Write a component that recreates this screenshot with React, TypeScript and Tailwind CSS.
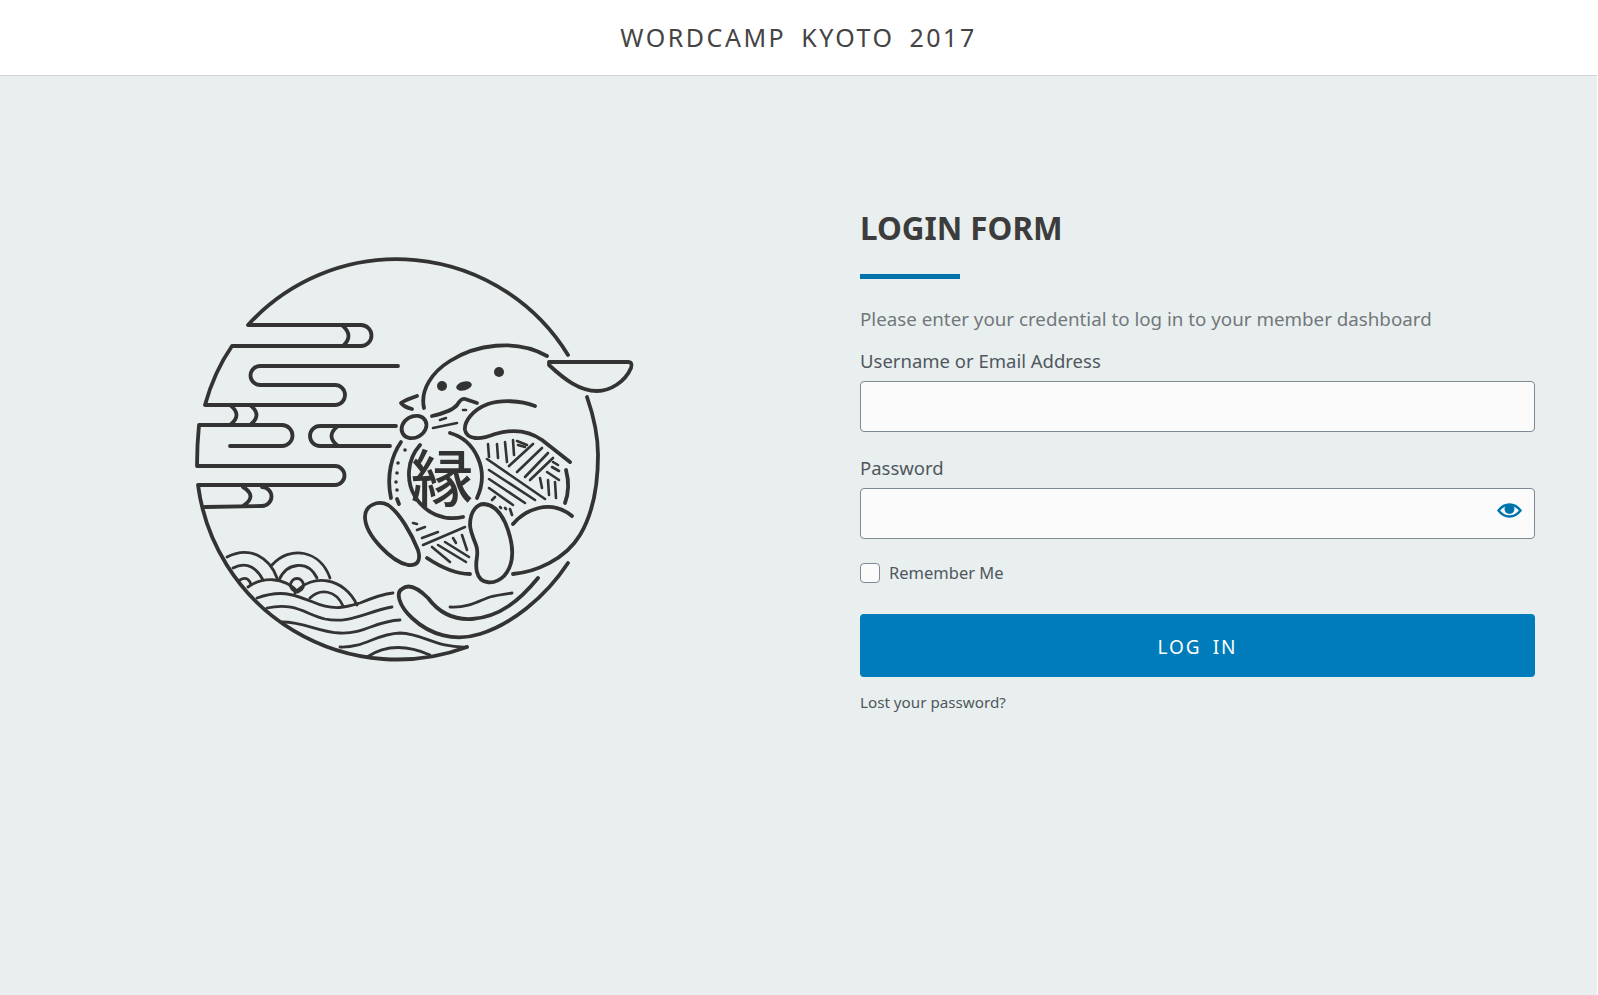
const FONT = "font-['Noto_Sans',sans-serif]";

// fine stripes on the ball of yarn, [x1, y1, x2, y2]
const stripes: number[][] = [
  [488, 444, 489, 457], [497, 444, 498, 458], [505, 442, 507, 462], [513, 440, 514, 455],
  [518, 445, 525, 447], [517, 441, 527, 445],
  [509, 466, 533, 444], [517, 472, 542, 448], [525, 477, 548, 453], [530, 480, 553, 458],
  [553, 462, 558, 465], [547, 472, 559, 480], [552, 467, 559, 471],
  [540, 478, 542, 488], [548, 480, 549, 495], [555, 482, 556, 498],
  [487, 459, 545, 499], [489, 470, 535, 500], [489, 479, 525, 503], [489, 488, 513, 505],
  [492, 500, 495, 497], [500, 507, 501, 508], [505, 508, 506, 509], [510, 509, 512, 515],
  [413, 523, 417, 524], [417, 530, 425, 527], [422, 538, 438, 532], [423, 545, 465, 527],
  [432, 547, 450, 562], [438, 545, 466, 562], [445, 542, 469, 557], [453, 538, 456, 543],
  [462, 535, 467, 550],
];

const dots: number[][] = [
  [405, 450], [398, 463], [397, 473], [396, 482], [397, 490],
];

function Logo() {
  return (
    <svg viewBox="190 250 450 420" width="450" height="420" fill="none" stroke="#333333" strokeWidth="3.8" strokeLinecap="round" strokeLinejoin="round">
      {/* rim and clouds */}
      <path d="M568 355 A201 201 0 0 0 248 325 L361 325 A10.5 10.5 0 0 1 361 346 L232 346 Q214 372 205 405 L335 405 A10 10 0 0 0 335 385 L260 385 A9.5 9.5 0 0 1 260 366 L398 366" />
      <path d="M343 326 Q354 336 343 346 M230 405 Q243 415 230 425 M250 405 Q263 415 250 425" />
      <path d="M396 426 L320 426 A10 10 0 0 0 320 446 L390 446 M338 426 Q325 436 338 446" />
      <path d="M230 446 L282 446 A10.5 10.5 0 0 0 282 425 L199 425 Q197 445 197 466 L335 466 A9.5 9.5 0 0 1 335 485 L198 485 A201 201 0 0 0 467 647" />
      <path d="M205 507 L262 506 A9.5 9.5 0 0 0 262 487 M243 506 Q258 496 243 487" />
      {/* waves */}
      <g strokeWidth="2.8">
        <path d="M227 557 C250 545 270 558 277 578 M233 568 C248 560 258 570 263 580 M240 580 C246 576 250 580 251 585" />
        <path d="M272 565 C290 545 320 550 330 578 M279 580 C287 562 308 560 317 578" />
        <circle cx="297" cy="585" r="6.5" />
        <path d="M248 587 C262 577 283 576 298 592 M295 593 C312 572 345 578 357 605 M310 598 C320 588 336 590 343 606" />
        <path d="M257 598 C285 588 298 597 313 602 C335 612 350 606 360 603 C372 598 382 594 393 593" />
        <path d="M267 608 C295 602 305 614 325 619 C350 624 365 612 392 607" />
        <path d="M282 622 C305 622 318 632 340 633 C365 634 375 621 400 620" />
        <path d="M340 647 C365 648 375 634 400 633 C425 634 435 648 467 647 M367 657 C385 645 405 644 430 655" />
      </g>
      {/* seal */}
      <path d="M424 408 C420 390 432 372 450 361 C475 345 515 338 547 356" />
      <path d="M549 362 L628 362 Q633 362 631 368 C625 382 610 391 597 391 C580 391 565 380 549 365 Z" />
      <path d="M587 397 C595 420 598 440 598 455 C598 490 592 515 580 535 C565 560 535 572 513 574" />
      <path d="M568 563 C545 598 510 625 480 634 C455 642 430 635 412 618 C398 605 396 592 402 589 C410 582 420 590 428 598 C440 614 455 620 472 619 C500 617 520 600 538 578" />
      <path d="M450 607 C470 608 480 600 490 597 C497 595 505 594 512 593" strokeWidth="2.8" />
      <circle cx="499" cy="372" r="5" fill="#333333" stroke="none" />
      <circle cx="442" cy="386" r="5" fill="#333333" stroke="none" />
      <ellipse cx="464" cy="386" rx="8" ry="4.5" transform="rotate(-15 464 386)" fill="#333333" stroke="none" />
      <path d="M432 416 C445 413 453 410 457 405 C460 400 462 398 465 399 L477 403" />
      <path d="M433 428 L457 423 M440 420 L446 418 M463 410 L466 410" strokeWidth="2.6" />
      <path d="M535 406 C520 400 500 400 488 404 C472 410 464 422 465 430 C467 440 480 440 495 434 C512 429 528 430 542 440 L570 462" />
      <ellipse cx="414" cy="427" rx="13" ry="10.5" transform="rotate(-30 414 427)" />
      <path d="M417 396 Q405 400 401 403 Q404 407 412 409" />
      <path d="M365 517 C365 505 378 500 388 505 C400 513 412 535 418 550 C421 560 418 566 408 565 C392 562 365 535 365 517 Z" />
      <path d="M470 525 C470 510 478 504 484 504 C495 505 503 515 508 530 C514 548 514 565 504 576 C495 585 480 585 477 572 C474 560 480 555 476 545 C472 535 470 530 470 525 Z" />
      <path d="M513 524 C525 510 550 498 572 516" />
      {/* ball of yarn */}
      <path d="M401 442 C392 455 386 475 391 498" />
      <path d="M420 445 A44 44 0 0 0 463 517 M450 433 C475 440 490 470 477 498" />
      <path d="M427 558 C445 570 460 574 470 574" />
      <path d="M566 470 C570 485 568 495 565 503" />
      <g strokeWidth="2.6">
        {stripes.map(([x1, y1, x2, y2], i) => (
          <line key={i} x1={x1} y1={y1} x2={x2} y2={y2} />
        ))}
      </g>
      {dots.map(([cx, cy], i) => (
        <circle key={i} cx={cx} cy={cy} r="1.8" fill="#333333" stroke="none" />
      ))}
      <path d="M397 499 L399 504" />
      <text x="442" y="502" textAnchor="middle" fontSize="62" fontWeight="500" fill="#333333" stroke="none" fontFamily="'Noto Sans CJK JP', sans-serif">縁</text>
    </svg>
  );
}

function EyeIcon() {
  return (
    <svg viewBox="0 0 25 15" width="25" height="15" fill="none" stroke="#0073aa" strokeWidth="2.4">
      <path d="M1.5 7.5 C5 3 9 1.5 12.5 1.5 C16 1.5 20 3 23.5 7.5 C20 12 16 13.5 12.5 13.5 C9 13.5 5 12 1.5 7.5 Z" />
      <circle cx="12.5" cy="6" r="5" fill="#0073aa" stroke="none" />
    </svg>
  );
}

export default function App() {
  return (
    <div className={`${FONT} min-h-screen bg-[#e9efef] border-r border-white`}>
      <header className="h-[76px] bg-white border-b border-[#d0d4d4] flex items-center justify-center">
        <h1 className="text-[25px] font-normal tracking-[2.5px] [word-spacing:6px] text-[#444444]">WORDCAMP KYOTO 2017</h1>
      </header>
      <main className="flex">
        <div className="w-[860px] pl-[190px] pt-[174px] shrink-0">
          <Logo />
        </div>
        <div className="w-[675px] pt-[128px]">
          <h2 className="text-[31.4px] leading-[48px] font-bold text-[#3c3c3c]">LOGIN FORM</h2>
          <div className="w-[100px] h-[5px] bg-[#0073aa] mt-[22px]"></div>
          <p className="text-[18.75px] leading-[27px] text-[#72777c] mt-[26px]">Please enter your credential to log in to your member dashboard</p>
          <form>
            <label htmlFor="user" className="block text-[18.5px] leading-[27px] text-[#50575e] mt-[15px] mb-[7px]">Username or Email Address</label>
            <input id="user" type="text" className="block w-full h-[51px] bg-[#fbfbfc] border border-[#7e8993] rounded" />
            <label htmlFor="pass" className="block text-[18.5px] leading-[27px] text-[#50575e] mt-[22px] mb-[7px]">Password</label>
            <div className="relative">
              <input id="pass" type="password" className="block w-full h-[51px] bg-[#fbfbfc] border border-[#7e8993] rounded" />
              <span className="absolute right-[13px] top-[15px]"><EyeIcon /></span>
            </div>
            <div className="flex items-center gap-[9px] mt-[22px]">
              <input id="remember" type="checkbox" className="appearance-none w-5 h-5 bg-[#fbfbfc] border border-[#7e8993] rounded" />
              <label htmlFor="remember" className="text-[16.5px] text-[#50575e]">Remember Me</label>
            </div>
            <button type="button" className="block w-full h-[63px] mt-[28px] pt-[3px] bg-[#007cba] rounded text-white text-[19px] tracking-[2px] [word-spacing:4px]">LOG IN</button>
            <a href="#" className="block mt-[14px] text-[15.2px] text-[#50575e]">Lost your password?</a>
          </form>
        </div>
      </main>
    </div>
  );
}
